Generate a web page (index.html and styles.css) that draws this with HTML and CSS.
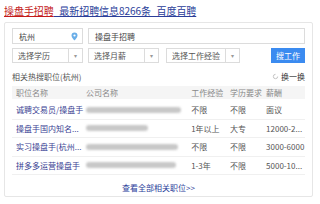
FILE: index.html
```html
<!DOCTYPE html>
<html>
<head>
<meta charset="utf-8">
<link rel="stylesheet" href="styles.css">
</head>
<body>
<div class="page">
  <div class="title"><a class="t-red">操盘手招聘</a><a class="t-blue">_最新招聘信息8266条_百度百聘</a></div>
  <div class="card">
    <div class="row1">
      <div class="box city"><span>杭州</span>
        <svg class="pin" width="7" height="9" viewBox="0 0 7 9"><path d="M3.5 0.5a3 3 0 0 1 3 3c0 2-3 5-3 5s-3-3-3-5a3 3 0 0 1 3-3z" fill="#6aaee8"/><circle cx="3.5" cy="3.5" r="1.1" fill="#fff"/></svg>
      </div>
      <div class="box query"><span>操盘手招聘</span></div>
    </div>
    <div class="row2">
      <div class="box sel s1"><span class="lbl">选择学历</span><span class="arr">▾</span></div>
      <div class="box sel s2"><span class="lbl">选择月薪</span><span class="arr">▾</span></div>
      <div class="box sel s3"><span class="lbl">选择工作经验</span><span class="arr">▾</span></div>
      <div class="btn">搜工作</div>
    </div>
    <div class="hot">
      <span>相关热搜职位(杭州)</span>
      <span class="swap"><svg width="7" height="7" viewBox="0 0 8 8"><path d="M6.5 4A2.5 2.5 0 1 1 4 1.5" fill="none" stroke="#bbb" stroke-width="1"/></svg>换一换</span>
    </div>
    <div class="table">
      <div class="tr th"><span class="c1">职位名称</span><span class="c2">公司名称</span><span class="c3">工作经验</span><span class="c4">学历要求</span><span class="c5">薪酬</span></div>
      <div class="tr"><span class="c1 job">诚聘交易员/操盘手</span><span class="c2"><i class="blur" style="width:95px"></i></span><span class="c3">不限</span><span class="c4">不限</span><span class="c5">面议</span></div>
      <div class="tr"><span class="c1 job">操盘手国内知名...</span><span class="c2"><i class="blur" style="width:62px"></i></span><span class="c3">1年以上</span><span class="c4">大专</span><span class="c5">12000-2...</span></div>
      <div class="tr"><span class="c1 job">实习操盘手(杭州...</span><span class="c2"><i class="blur" style="width:92px"></i></span><span class="c3">不限</span><span class="c4">不限</span><span class="c5">3000-6000</span></div>
      <div class="tr"><span class="c1 job">拼多多运营操盘手</span><span class="c2"><i class="blur" style="width:90px"></i></span><span class="c3">1-3年</span><span class="c4">不限</span><span class="c5">5000-10...</span></div>
    </div>
    <div class="more">查看全部相关职位&gt;&gt;</div>
  </div>
</div>
</body>
</html>
```
FILE: styles.css
```css
* { box-sizing: border-box; }
html, body { margin: 0; padding: 0; background: #fff; }
body { font-family: "Noto Sans CJK SC", "Liberation Sans", sans-serif; width: 320px; height: 204px; overflow: hidden; }
.page { padding: 4px 0 0 4px; }
.title { font-size: 10px; line-height: 14px; height: 15px; white-space: nowrap; letter-spacing: -0.05px; }
.title a { text-decoration: underline; text-underline-offset: 1px; }
.t-red { color: #c41a1a; }
.t-blue { color: #2b3e9a; }
.card { margin-top: 3px; width: 309px; height: 175px; border: 1px solid #e6e6e6; border-radius: 2px; padding: 5px 7px 0 7px; font-size: 8px; color: #555; }
.row1 { display: flex; gap: 5px; }
.box { border: 1px solid #dcdcdc; height: 16px; display: flex; align-items: center; padding-left: 6px; background: #fff; }
.city { width: 71px; justify-content: space-between; padding-right: 4px; color: #444; }
.query { flex: 1; color: #444; }
.row2 { display: flex; gap: 5px; margin-top: 4px; align-items: center; }
.sel { height: 15px; padding-left: 5px; }
.sel .lbl { flex: 1; }
.sel .arr { width: 14px; height: 100%; border-left: 1px solid #dcdcdc; display: flex; align-items: center; justify-content: center; color: #999; font-size: 6px; }
.s1 { width: 71px; }
.s2 { width: 71px; }
.s3 { width: 74px; margin-left: 2px; }
.btn { margin-left: auto; width: 34px; height: 15px; background: #3b8bf0; color: #fff; display: flex; align-items: center; justify-content: center; font-size: 8px; }
.hot { display: flex; justify-content: space-between; margin-top: 7px; height: 12px; align-items: center; color: #555; }
.swap { display: flex; align-items: center; gap: 2px; color: #333; }
.table { margin-top: 4px; }
.tr { display: flex; align-items: center; height: 18.5px; border-bottom: 1px solid #f0f0f0; padding-left: 4px; }
.th { height: 13px; background: #f5f5f5; color: #888; border-bottom: none; margin-bottom: 2px; }
.c1 { width: 72px; white-space: nowrap; overflow: hidden; }
.c2 { width: 108px; display: flex; align-items: center; }
.c3 { width: 40px; }
.c4 { width: 37px; }
.c5 { width: 40px; white-space: nowrap; }
.job { color: #3a3f93; }
.blur { display: block; height: 6px; background: #c8c8c8; border-radius: 3px; filter: blur(1.2px); }
.more { text-align: center; color: #2b3e9a; margin-top: 7px; }
```
